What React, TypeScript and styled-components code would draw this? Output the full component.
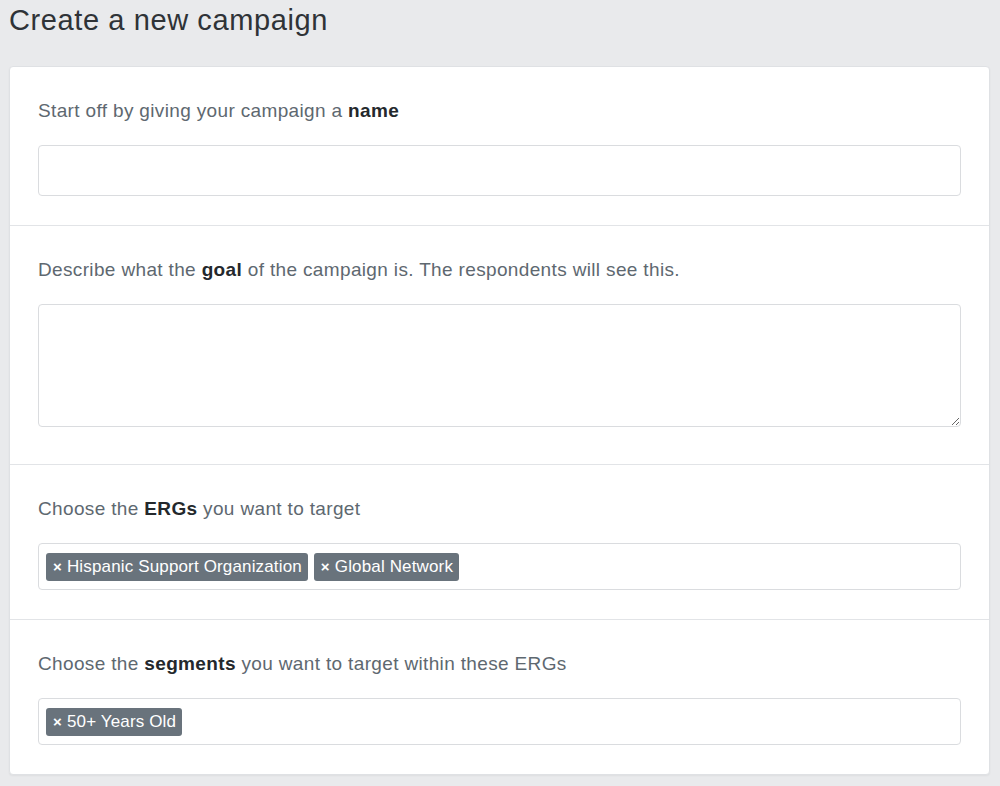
import React from "react";
import styled, { createGlobalStyle } from "styled-components";

const Global = createGlobalStyle`
  html, body { margin: 0; padding: 0; background: #e9eaec; }
  body { font-family: "Liberation Sans", Arial, Helvetica, sans-serif; }
  * { box-sizing: border-box; }
`;

const Page = styled.div`
  padding: 0 10px 0 9px;
  min-height: 786px;
`;

const Title = styled.h1`
  margin: 0;
  padding-top: 2px;
  height: 66px;
  font-size: 29px;
  letter-spacing: 0.6px;
  font-weight: 400;
  line-height: 36px;
  color: #2f3337;
`;

const Card = styled.div`
  background: #fff;
  border: 1px solid #dfe1e4;
  border-radius: 4px;
  box-shadow: 0 1px 2px rgba(0, 0, 0, 0.05);
`;

const Section = styled.section<{ $last?: boolean }>`
  padding: 30px 28px 29px 28px;
  border-bottom: ${(p) => (p.$last ? "none" : "1px solid #e2e4e7")};
`;

const Label = styled.div`
  font-size: 19px;
  letter-spacing: 0.35px;
  line-height: 28px;
  color: #5e6870;
  margin-bottom: 20px;
  b {
    font-weight: 700;
    color: #24282c;
  }
`;

const TextInput = styled.input`
  display: block;
  width: 100%;
  height: 51px;
  border: 1px solid #dadcdf;
  border-radius: 4px;
  font: inherit;
  font-size: 18px;
  padding: 0 12px;
  outline: none;
  background: #fff;
`;

const TextArea = styled.textarea`
  display: block;
  width: 100%;
  height: 123px;
  border: 1px solid #dadcdf;
  border-radius: 4px;
  font: inherit;
  font-size: 18px;
  padding: 8px 12px;
  margin-bottom: 8px;
  outline: none;
  resize: vertical;
  background: #fff;
`;

const TagBox = styled.div`
  display: flex;
  flex-wrap: wrap;
  align-items: center;
  gap: 6px;
  height: 47px;
  border: 1px solid #dadcdf;
  border-radius: 4px;
  padding: 0 7px;
  background: #fff;
`;

const Tag = styled.span`
  display: inline-flex;
  align-items: center;
  height: 28px;
  padding: 0 6px 0 7px;
  background: #69737c;
  color: #fff;
  border-radius: 3px;
  font-size: 17px;
  letter-spacing: 0.15px;
  line-height: 28px;
  white-space: nowrap;
`;

const Remove = styled.span`
  font-weight: 700;
  font-size: 15px;
  margin-right: 5px;
`;

const TagItem = ({ text }: { text: string }) => (
  <Tag>
    <Remove>×</Remove>
    {text}
  </Tag>
);

export default function App() {
  return (
    <>
      <Global />
      <Page>
        <Title>Create a new campaign</Title>
        <Card>
          <Section>
            <Label>
              Start off by giving your campaign a <b>name</b>
            </Label>
            <TextInput />
          </Section>
          <Section>
            <Label>
              Describe what the <b>goal</b> of the campaign is. The respondents will see this.
            </Label>
            <TextArea />
          </Section>
          <Section>
            <Label>
              Choose the <b>ERGs</b> you want to target
            </Label>
            <TagBox>
              <TagItem text="Hispanic Support Organization" />
              <TagItem text="Global Network" />
            </TagBox>
          </Section>
          <Section $last>
            <Label>
              Choose the <b>segments</b> you want to target within these ERGs
            </Label>
            <TagBox>
              <TagItem text="50+ Years Old" />
            </TagBox>
          </Section>
        </Card>
      </Page>
    </>
  );
}
